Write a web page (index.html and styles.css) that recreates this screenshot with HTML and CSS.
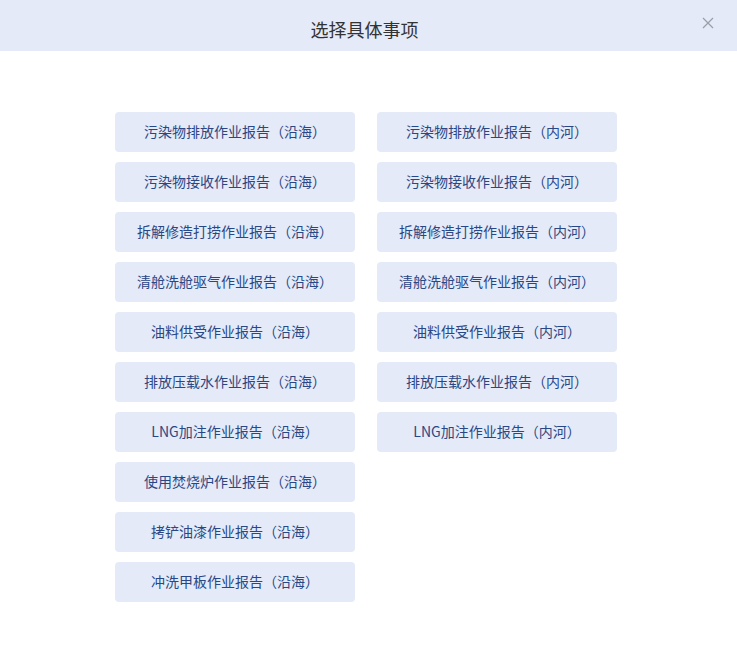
FILE: index.html
```html
<!DOCTYPE html>
<html lang="zh">
<head>
<meta charset="utf-8">
<link rel="stylesheet" href="styles.css">
</head>
<body>
<div class="dialog">
  <header class="head">
    <h1 class="title">选择具体事项</h1>
    <span class="close" aria-label="关闭">
      <svg width="12" height="12" viewBox="0 0 12 12"><path d="M1 1L11 11M11 1L1 11" stroke="#9a9ea8" stroke-width="1.2" fill="none"/></svg>
    </span>
  </header>
  <main class="body">
    <div class="grid">
      <button class="item">污染物排放作业报告（沿海）</button>
      <button class="item">污染物排放作业报告（内河）</button>
      <button class="item">污染物接收作业报告（沿海）</button>
      <button class="item">污染物接收作业报告（内河）</button>
      <button class="item">拆解修造打捞作业报告（沿海）</button>
      <button class="item">拆解修造打捞作业报告（内河）</button>
      <button class="item">清舱洗舱驱气作业报告（沿海）</button>
      <button class="item">清舱洗舱驱气作业报告（内河）</button>
      <button class="item">油料供受作业报告（沿海）</button>
      <button class="item">油料供受作业报告（内河）</button>
      <button class="item">排放压载水作业报告（沿海）</button>
      <button class="item">排放压载水作业报告（内河）</button>
      <button class="item">LNG加注作业报告（沿海）</button>
      <button class="item">LNG加注作业报告（内河）</button>
      <button class="item">使用焚烧炉作业报告（沿海）</button>
      <span></span>
      <button class="item">拷铲油漆作业报告（沿海）</button>
      <span></span>
      <button class="item">冲洗甲板作业报告（沿海）</button>
    </div>
  </main>
</div>
</body>
</html>
```

FILE: styles.css
```css
html, body {
  margin: 0;
  padding: 0;
  background: #fff;
  font-family: "Microsoft YaHei", "Noto Sans CJK SC", "Liberation Sans", sans-serif;
}
.dialog {
  width: 737px;
  height: 665px;
  background: #fff;
}
.head {
  position: relative;
  height: 51px;
  background: #e4eaf7;
  display: flex;
  align-items: center;
  justify-content: center;
}
.title {
  margin: 6px 8px 0 0;
  font-size: 18px;
  font-weight: normal;
  color: #333;
  line-height: 24px;
}
.close {
  position: absolute;
  right: 23px;
  top: 17px;
  width: 12px;
  height: 12px;
  display: flex;
}
.body {
  padding: 61px 0 0 115px;
}
.grid {
  display: grid;
  grid-template-columns: 240px 240px;
  column-gap: 22px;
  row-gap: 10px;
}
.item {
  height: 40px;
  border: none;
  border-radius: 4px;
  background: #e4eaf7;
  color: #2a4785;
  font-family: inherit;
  font-size: 14px;
  padding: 0 0 2px;
  cursor: pointer;
}
```
